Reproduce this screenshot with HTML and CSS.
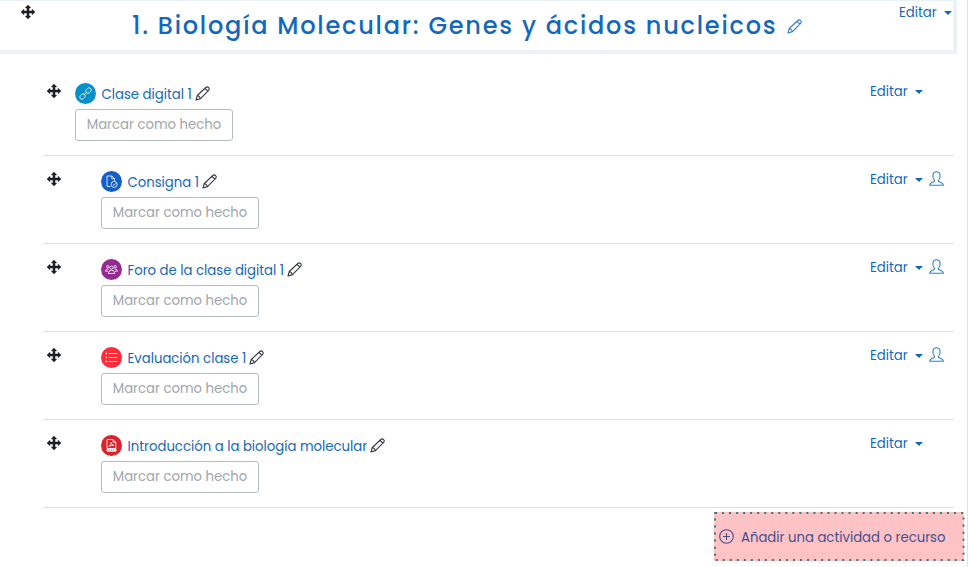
FILE: index.html
```
<!DOCTYPE html>
<html lang="es">
<head>
<meta charset="utf-8">
<title>Biología Molecular</title>
<link rel="stylesheet" href="styles.css">
</head>
<body>
<svg class="defs" aria-hidden="true">
  <symbol id="move" viewBox="0 0 14 14"><path d="M7 0L9.700 2.900H8V6H11.100V4.300L14 7L11.100 9.700V8H8V11.100H9.700L7 14L4.300 11.100H6V8H2.900V9.700L0 7L2.900 4.300V6H6V2.900H4.300Z" stroke="#1d2125" stroke-width=".5"/></symbol>
  <symbol id="pencil" viewBox="0 0 15 15"><path d="M1 14L2.300 9.500L10.800 1.500Q12.300.2 13.600 1.600T13.600 4.300L5.500 12.600ZM2.300 9.500Q4.800 10 5.500 12.600M10 2.300L12.900 5.100"/></symbol>
  <symbol id="person" viewBox="0 0 15 15"><path d="M5.600 9.400C3.200 7.600 2.900.8 7.500.8S11.800 7.600 9.400 9.400C8.900 11.700 14.300 10.800 14.300 14.200H.7C.7 10.800 6.100 11.700 5.600 9.400Z"/></symbol>
</svg>
<main class="page">
  <header class="section-head">
    <svg class="move"><use href="#move"/></svg>
    <h1 class="title">1. Biología Molecular: Genes y ácidos nucleicos</h1>
    <svg class="pencil title-pencil"><use href="#pencil"/></svg>
    <a class="edit">Editar<i class="caret"></i></a>
  </header>
  <ul class="activities">
    <li class="row">
      <svg class="move"><use href="#move"/></svg>
      <div class="body">
        <div class="name">
          <svg class="badge link" viewBox="0 0 21 21"><g transform="rotate(-45 10.500 10.500)"><rect x="3.300" y="8.400" width="6" height="4.200" rx="2.100"/><rect x="11.700" y="8.400" width="6" height="4.200" rx="2.100"/><path d="M8 10.500H13"/></g></svg>
          <a class="label">Clase digital 1</a><svg class="pencil"><use href="#pencil"/></svg>
        </div>
        <button class="done">Marcar como hecho</button>
      </div>
      <a class="edit">Editar<i class="caret"></i></a>
    </li>
    <li class="row indent">
      <svg class="move"><use href="#move"/></svg>
      <div class="body">
        <div class="name">
          <svg class="badge task" viewBox="0 0 21 21"><path d="M9.500 15.500H6V5H10.800L13.500 7.700V9.800M10.800 5V7.700H13.500M11.900 13.300L13 14.400L14.900 12.200"/><circle cx="13.200" cy="13.400" r="3"/></svg>
          <a class="label">Consigna 1</a><svg class="pencil"><use href="#pencil"/></svg>
        </div>
        <button class="done">Marcar como hecho</button>
      </div>
      <a class="edit">Editar<i class="caret"></i></a>
      <svg class="person"><use href="#person"/></svg>
    </li>
    <li class="row indent">
      <svg class="move"><use href="#move"/></svg>
      <div class="body">
        <div class="name">
          <svg class="badge forum" viewBox="0 0 21 21"><circle cx="10.500" cy="8.700" r="1.600"/><circle cx="6.800" cy="7.700" r="1.200"/><circle cx="14.200" cy="7.700" r="1.200"/><path d="M7.300 14.500Q7.300 11.200 10.500 11.200T13.700 14.500ZM4.500 12.200Q4.500 9.800 7.500 10M16.500 12.200Q16.500 9.800 13.500 10M4.500 12.200H7M14 12.200H16.500"/></svg>
          <a class="label">Foro de la clase digital 1</a><svg class="pencil"><use href="#pencil"/></svg>
        </div>
        <button class="done">Marcar como hecho</button>
      </div>
      <a class="edit">Editar<i class="caret"></i></a>
      <svg class="person"><use href="#person"/></svg>
    </li>
    <li class="row indent">
      <svg class="move"><use href="#move"/></svg>
      <div class="body">
        <div class="name">
          <svg class="badge quiz" viewBox="0 0 21 21"><path d="M7.500 6.500H16.500M7.500 10.500H16.500M7.500 14.500H16.500"/><path d="M4.500 6.500H6M4.500 10.500H6M4.500 14.500H6" stroke-width="1.500"/></svg>
          <a class="label">Evaluación clase 1</a><svg class="pencil"><use href="#pencil"/></svg>
        </div>
        <button class="done">Marcar como hecho</button>
      </div>
      <a class="edit">Editar<i class="caret"></i></a>
      <svg class="person"><use href="#person"/></svg>
    </li>
    <li class="row indent">
      <svg class="move"><use href="#move"/></svg>
      <div class="body">
        <div class="name">
          <svg class="badge pdf" viewBox="0 0 21 21"><path d="M6 13V4.500H12L14.800 7.300V13M12 4.500V7.300H14.800M8 11.500Q10 9.800 10 7.500Q10.600 10.200 12.800 10.300Q10 10 8 11.500"/><path class="solid" d="M6 13.500H15V16.200H6Z"/><path class="mark" d="M7.500 15H9M10 15H11.200M12.200 15H13.500"/></svg>
          <a class="label">Introducción a la biología molecular</a><svg class="pencil"><use href="#pencil"/></svg>
        </div>
        <button class="done">Marcar como hecho</button>
      </div>
      <a class="edit">Editar<i class="caret"></i></a>
    </li>
  </ul>
  <a class="add">
    <svg class="outline"><rect x="1" y="1" width="248.500" height="47"/></svg>
    <svg class="plus" viewBox="0 0 15 15"><circle cx="7.500" cy="7.500" r="6.800"/><path d="M7.500 4V11M4 7.500H11"/></svg>
    <span class="add-text">Añadir una actividad o recurso</span>
  </a>
</main>
</body>
</html>
```
FILE: styles.css
```
* { box-sizing: border-box; }
body { margin: 0; background: #fff; color: #1368bb; font: 13.24px/20px Poppins, Inter, sans-serif; }
svg { display: block; flex: none; fill: none; stroke-linejoin: round; }
.defs { position: absolute; width: 0; height: 0; }
.page { height: 567px; overflow: hidden; border-right: 1px solid #dfe3e6; }
.section-head { display: flex; align-items: flex-start; width: 957px; height: 54px; padding: 0 0 0 21px; border: solid #eaf2f8; border-width: 1px 4px 4px 0; }
.move { width: 14px; height: 14px; fill: #1d2125; }
.section-head .move { margin-top: 4px; }
.title { margin: 7px 0 0 97px; width: 647px; font-size: 24px; line-height: 36px; font-weight: 500; letter-spacing: 1.78px; white-space: nowrap; }
.pencil { width: 15px; height: 15px; margin-left: 3px; stroke: #343a40; stroke-width: 1.1; }
.title-pencil { margin: 18px 0 0 8px; stroke: #2f80cb; }
.edit { display: flex; align-items: center; width: 53px; }
.section-head .edit { margin: 2px 1px 0 auto; }
.caret { margin-left: auto; border: 4px solid transparent; border-top-color: #1368bb; border-bottom: 0; }
.activities { list-style: none; margin: 14px 0 0 43px; padding: 0; width: 911px; }
.row { display: flex; align-items: flex-start; height: 88px; border-bottom: 1px solid #dee2e6; }
.row .move { margin: 16px 0 0 4px; }
.body { flex: 1; margin: 14px 0 0 14px; }
.indent .body { margin-left: 40px; }
.name { display: flex; align-items: center; height: 22px; }
.badge { width: 21px; height: 21px; border-radius: 50%; stroke: #fff; stroke-width: .8; }
.link { background: #0590c7; }
.task { background: #1260c5; }
.forum { background: #942b92; }
.quiz { background: #fc2b39; }
.pdf { background: #d8232a; }
.solid { fill: #fff; }
.mark { stroke: #d8232a; }
.label { margin: 3px 0 0 5.5px; white-space: nowrap; }
.done { display: block; width: 158px; height: 32px; margin-top: 5px; padding: 0 0 1px; border: 1px solid #b5bcc4; border-radius: 3px; background: #fff; color: #a0a5aa; font: inherit; white-space: nowrap; }
.row .edit { margin: 14px 31px 0 0; }
.row .edit:has(+ .person) { margin-right: 6px; }
.row .edit .caret { margin-bottom: 1px; }
.person { width: 15px; height: 15px; margin: 15px 10px 0 0; stroke: #2f80cb; stroke-width: 1.1; }
.add { position: relative; display: flex; align-items: center; width: 250px; height: 49px; margin: 4px 3px 0 auto; padding: 2px 0 0 5px; background: #ffc2c5; color: #42508f; }
.outline { position: absolute; inset: 0; width: 251px; height: 49px; stroke: #39767f; stroke-width: 2; stroke-dasharray: 2 5.03; }
.plus { width: 15px; height: 15px; margin-bottom: 3px; stroke: #42508f; stroke-width: 1.1; }
.add-text { margin-left: 7px; white-space: nowrap; }
```
